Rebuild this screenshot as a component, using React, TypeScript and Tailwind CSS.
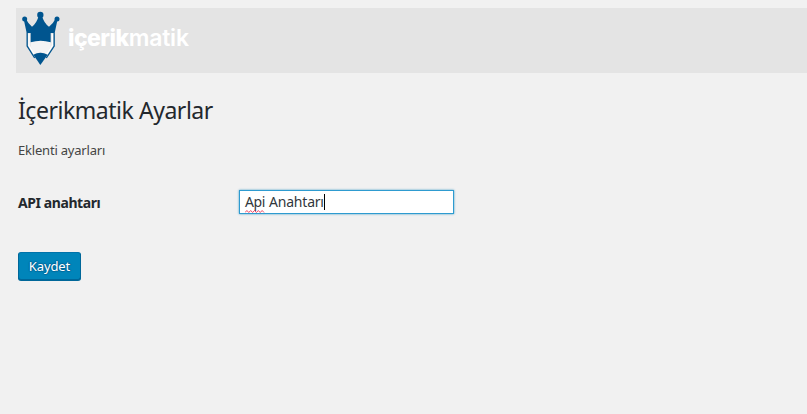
function Logo() {
  return (
    <svg className="h-[65px] w-[50px] shrink-0" viewBox="18 24 150 195" fill="none">
      <path d="M62 124 Q92 114 122 124 V140 L110 162 Q91 153 73 162 L62 140Z" fill="#f3f4f5" />
      <g fill="#00558f">
        <circle cx="44" cy="57" r="7.5" />
        <circle cx="91" cy="45" r="9.5" />
        <circle cx="141" cy="57" r="7.5" />
        <path d="M41 57 L48 57 Q55 72 66 80 Q80 70 86 48 H96 Q102 70 117 80 Q129 72 136 57 L143 57 L134 99 H122 V127 Q92 117 62 127 V99 H50 Z" />
        <path d="M70 164 Q91 153 113 164 L91 195 Z" />
      </g>
      <path d="M57 101 V137 L72 162 M127 101 V137 L111 162" stroke="#fff" strokeWidth="4" />
      <path d="M51.5 98 V138 L74 174 M132.5 98 V138 L109 174" stroke="#00558f" strokeWidth="4" />
    </svg>
  );
}

function SpellingMark() {
  return (
    <svg className="absolute bottom-[-1px] left-0 h-[3px] w-full" viewBox="0 0 21 3" preserveAspectRatio="none" fill="none">
      <path d="M0 2.5 L2 .5 L4 2.5 L6 .5 L8 2.5 L10 .5 L12 2.5 L14 .5 L16 2.5 L18 .5 L20 2.5" stroke="#f0425f" />
    </svg>
  );
}

export default function App() {
  return (
    <div className="h-[414px] overflow-hidden bg-[#f1f1f1] pl-4 pt-2 font-['Noto_Sans',sans-serif] text-[#444]">
      <header className="flex h-[65px] bg-[#e4e4e4]">
        <Logo />
        <div className="ml-[2px] mt-[14px] whitespace-nowrap font-['Inter',sans-serif] text-[23px] leading-[32px] text-white">
          <span className="font-extrabold tracking-[-0.55px]">içerik</span>
          <span className="font-semibold tracking-[-0.2px]">matik</span>
        </div>
      </header>
      <main className="pl-[2px]">
        <h1 className="mt-[21px] whitespace-nowrap text-[23px] leading-[32px] tracking-[-0.46px] text-[#23282d]">İçerikmatik Ayarlar</h1>
        <p className="mt-[14px] text-[13px] leading-5 tracking-[-0.2px]">Eklenti ayarları</p>
        <div className="mt-[30px] flex h-6 items-center">
          <label htmlFor="api" className="w-[221px] pt-px text-[14px] font-bold leading-5 tracking-[-0.42px] text-[#23282d]">API anahtarı</label>
          <div id="api" className="flex h-6 w-[215px] items-center border border-[#2e9bd0] bg-white pl-[5px] text-[14px] leading-5 text-[#32373c] shadow-[0_0_2px_rgba(30,140,190,0.8)]">
            <span className="relative tracking-[-0.4px]">Api<SpellingMark /></span>
            <span className="ml-1 tracking-[-0.2px]">Anahtarı</span>
            <span className="h-4 w-px bg-black" />
          </div>
        </div>
        <button className="mt-[38px] flex h-7 w-[63px] items-center justify-center rounded-[3px] border border-[#006799] border-t-[#0073aa] bg-[#0085ba] text-[13px] leading-5 tracking-[-0.1px] text-white shadow-[0_1px_0_#006799] [text-shadow:0_-1px_1px_#006799,1px_0_1px_#006799,0_1px_1px_#006799,-1px_0_1px_#006799]">
          Kaydet
        </button>
      </main>
    </div>
  );
}
